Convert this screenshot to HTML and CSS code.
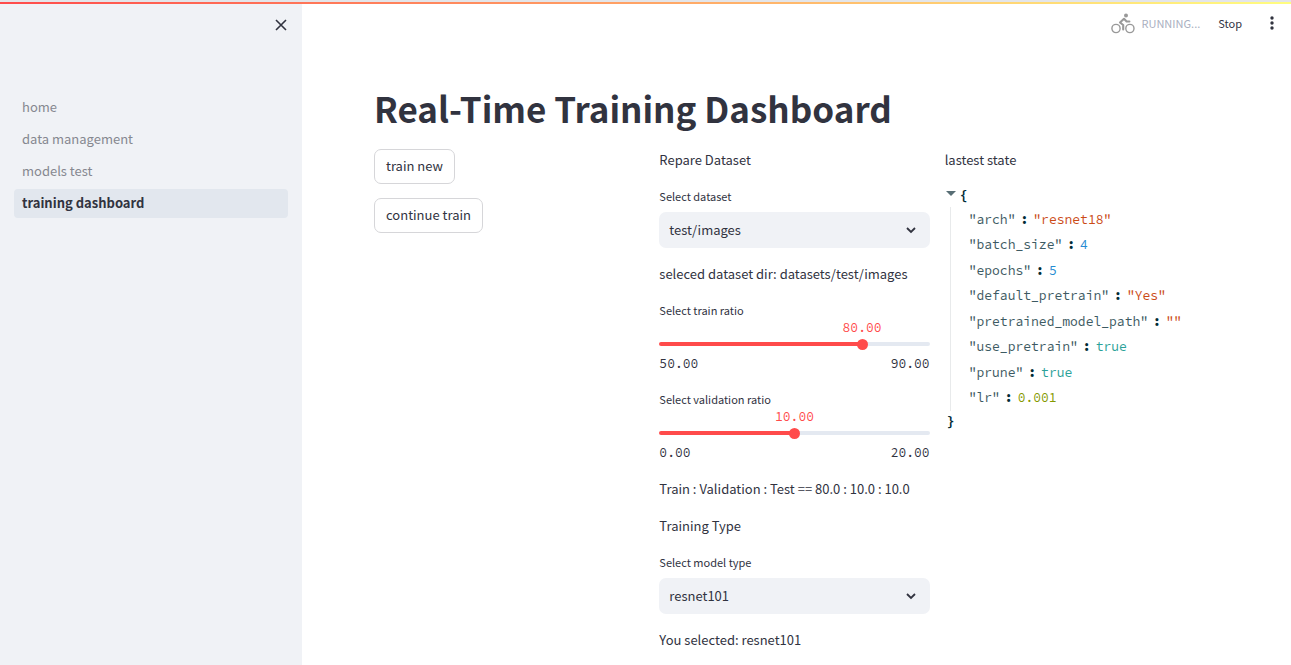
FILE: index.html
```html
<!DOCTYPE html>
<html lang="en">
<head>
<meta charset="utf-8">
<meta name="viewport" content="width=device-width, initial-scale=1">
<title>training dashboard</title>
<link rel="stylesheet" href="styles.css">
</head>
<body>
<div class="decoration"></div>
<div class="app">
  <aside class="sidebar">
    <button class="close" type="button" aria-label="Close sidebar">
      <svg width="12" height="12" viewBox="0 0 12 12"><path d="M1 1l10 10M11 1L1 11" fill="none" stroke="currentColor" stroke-width="1.6"/></svg>
    </button>
    <nav class="nav">
      <a href="#home">home</a>
      <a href="#data">data management</a>
      <a href="#models">models test</a>
      <a href="#training" class="active" aria-current="page">training dashboard</a>
    </nav>
  </aside>
  <main class="main">
    <header class="toolbar">
      <div class="status">
        <svg class="bike" width="24" height="21" viewBox="0 0 24 21" fill="none" stroke="currentColor">
          <circle cx="5" cy="15.5" r="4.1" stroke-width="1.4"/>
          <circle cx="18.9" cy="15.5" r="4.1" stroke-width="1.4"/>
          <circle cx="15" cy="2.6" r="2" fill="currentColor" stroke="none"/>
          <path d="M18.4 8.5h-2.8l-2.6-2.7-4 3.7 3.2 2.5v4.4" stroke-width="2.1" stroke-linecap="round" stroke-linejoin="round"/>
        </svg>
        <span>RUNNING...</span>
      </div>
      <button class="stop" type="button">Stop</button>
      <button class="menu" type="button" aria-label="Main menu">
        <svg width="4" height="14" viewBox="0 0 4 14" fill="currentColor"><circle cx="2" cy="2" r="1.7"/><circle cx="2" cy="7" r="1.7"/><circle cx="2" cy="12" r="1.7"/></svg>
      </button>
    </header>
    <div class="content">
      <h1>Real-Time Training Dashboard</h1>
      <div class="columns">
        <section class="actions">
          <button class="btn" type="button">train new</button>
          <button class="btn" type="button">continue train</button>
        </section>
        <section class="form">
          <p>Repare Dataset</p>
          <div class="field">
            <label for="dataset">Select dataset</label>
            <div class="select">
              <select id="dataset"><option>test/images</option></select>
              <svg width="10" height="7" viewBox="0 0 10 7"><path d="M1 1l4 4 4-4" fill="none" stroke="currentColor" stroke-width="1.8"/></svg>
            </div>
          </div>
          <p>seleced dataset dir: datasets/test/images</p>
          <div class="slider" style="--value: 75%">
            <label for="train">Select train ratio</label>
            <div class="control">
              <output for="train">80.00</output>
              <div class="rail"></div>
              <input id="train" type="range" min="50" max="90" value="80">
            </div>
            <div class="ticks"><span>50.00</span><span>90.00</span></div>
          </div>
          <div class="slider" style="--value: 50%">
            <label for="validation">Select validation ratio</label>
            <div class="control">
              <output for="validation">10.00</output>
              <div class="rail"></div>
              <input id="validation" type="range" min="0" max="20" value="10">
            </div>
            <div class="ticks"><span>0.00</span><span>20.00</span></div>
          </div>
          <p>Train : Validation : Test == 80.0 : 10.0 : 10.0</p>
          <p>Training Type</p>
          <div class="field">
            <label for="model">Select model type</label>
            <div class="select">
              <select id="model"><option>resnet101</option></select>
              <svg width="10" height="7" viewBox="0 0 10 7"><path d="M1 1l4 4 4-4" fill="none" stroke="currentColor" stroke-width="1.8"/></svg>
            </div>
          </div>
          <p>You selected: resnet101</p>
        </section>
        <section class="state">
          <p>lastest state</p>
          <div class="json">
            <div class="open">
              <svg width="10" height="6" viewBox="0 0 10 6"><path d="M0 0h10L5 5z" fill="currentColor"/></svg>
              <span class="brace">{</span>
            </div>
            <div class="entries">
              <div><span class="key">"arch"</span><b>:</b><span class="string">"resnet18"</span></div>
              <div><span class="key">"batch_size"</span><b>:</b><span class="int">4</span></div>
              <div><span class="key">"epochs"</span><b>:</b><span class="int">5</span></div>
              <div><span class="key">"default_pretrain"</span><b>:</b><span class="string">"Yes"</span></div>
              <div><span class="key">"pretrained_model_path"</span><b>:</b><span class="string">""</span></div>
              <div><span class="key">"use_pretrain"</span><b>:</b><span class="bool">true</span></div>
              <div><span class="key">"prune"</span><b>:</b><span class="bool">true</span></div>
              <div><span class="key">"lr"</span><b>:</b><span class="float">0.001</span></div>
            </div>
            <span class="brace">}</span>
          </div>
        </section>
      </div>
    </div>
  </main>
</div>
</body>
</html>
```
FILE: styles.css
```css
:root {
  --sans: "Source Sans Pro", "Noto Sans CJK SC", "Open Sans", sans-serif;
  --mono: "Source Code Pro", "Noto Sans Mono CJK SC", "Liberation Mono", monospace;
  --text: #31333f;
  --primary: #ff4b4b;
  --soft: #f0f2f6;
}
* { box-sizing: border-box; }
body {
  margin: 0;
  overflow: hidden;
  font: 13px/22px var(--sans);
  color: var(--text);
  background: #fff;
}
button, select { font: inherit; color: inherit; }
p, h1 { margin: 0; }
svg { display: block; }

.decoration {
  position: absolute;
  inset: 0 0 auto;
  height: 4px;
  border-top: 2px solid #e3e5e9;
  background: linear-gradient(90deg, #ff4b4b, #fffd80);
}
.app { display: flex; min-height: 100vh; }

.sidebar {
  flex: 0 0 302px;
  padding: 15px 14px;
  background: var(--soft);
}
.close {
  display: block;
  margin-left: auto;
  padding: 4px 1px;
  border: 0;
  background: none;
}
.nav { display: grid; gap: 3px; margin-top: 58px; }
.nav a {
  padding: 3px 8px 4px;
  border-radius: 4px;
  color: #868890;
  text-decoration: none;
}
.nav .active { background: #e2e7ee; color: var(--text); font-weight: 600; }

.main { flex: 1; min-width: 0; }
.toolbar {
  display: flex;
  align-items: center;
  justify-content: flex-end;
  height: 46px;
  padding-right: 17px;
  font-size: 11px;
}
.toolbar button { padding: 0; border: 0; background: none; }
.status { display: flex; align-items: center; gap: 7px; color: #a9afbf; }
.bike { color: #999; }
.toolbar .stop { margin: 0 28px 0 18px; }

.content { padding: 36px 76px 0 72px; }
h1 { font-size: 35px; line-height: 52px; font-weight: 700; }
.columns {
  display: grid;
  grid-template-columns: repeat(3, minmax(0, 1fr));
  gap: 15px;
  margin-top: 15px;
}
.actions { display: flex; flex-direction: column; align-items: flex-start; gap: 14px; }
.btn {
  height: 35px;
  padding: 0 11px 2px;
  border: 1px solid #d6d6d9;
  border-radius: 7px;
  background: #fff;
}

.form { display: flex; flex-direction: column; gap: 15px; }
label { display: block; font-size: 11px; line-height: 20px; }
.select { display: grid; align-items: center; margin-top: 6px; }
.select > * { grid-area: 1 / 1; }
.select select {
  width: 100%;
  height: 36px;
  padding: 0 10px;
  border: 0;
  border-radius: 7px;
  background: var(--soft);
  appearance: none;
}
.select svg { justify-self: end; margin-right: 14px; pointer-events: none; }

.control { position: relative; height: 34px; padding-top: 18px; }
.control output {
  position: absolute;
  top: -3px;
  left: var(--value);
  transform: translateX(-50%);
  font: 13px/22px var(--mono);
  color: var(--primary);
}
.rail {
  height: 4px;
  margin-top: 4px;
  border-radius: 4px;
  background: linear-gradient(90deg, var(--primary) var(--value), #e4e9f1 var(--value));
}
.control input {
  display: block;
  appearance: none;
  width: calc(100% + 12px);
  height: 12px;
  margin: -8px -6px 0;
  background: none;
}
.control input::-webkit-slider-thumb {
  appearance: none;
  width: 11px;
  height: 11px;
  border-radius: 50%;
  background: var(--primary);
}
.ticks {
  display: flex;
  justify-content: space-between;
  font: 13px/20px var(--mono);
}

.json { margin-top: 14px; font: 13px/22px var(--mono); }
.open { display: flex; gap: 4px; }
.open svg { margin: 6px 0 0 1px; color: #586e75; }
.brace, .json b { font-weight: 700; color: #002b36; }
.entries {
  display: grid;
  grid-auto-rows: 1fr;
  min-height: 204px;
  margin-left: 5px;
  padding-left: 18px;
  border-left: 1px solid #e8eaeb;
}
.entries > div { display: flex; align-items: center; white-space: nowrap; }
.json b { margin: 0 5px; }
.json > .brace { margin-left: 2px; line-height: 20px; }
.key { color: #3d5a62; }
.string { color: #cb4b16; }
.int { color: #268bd2; }
.bool { color: #2aa198; }
.float { color: #859900; }
```
